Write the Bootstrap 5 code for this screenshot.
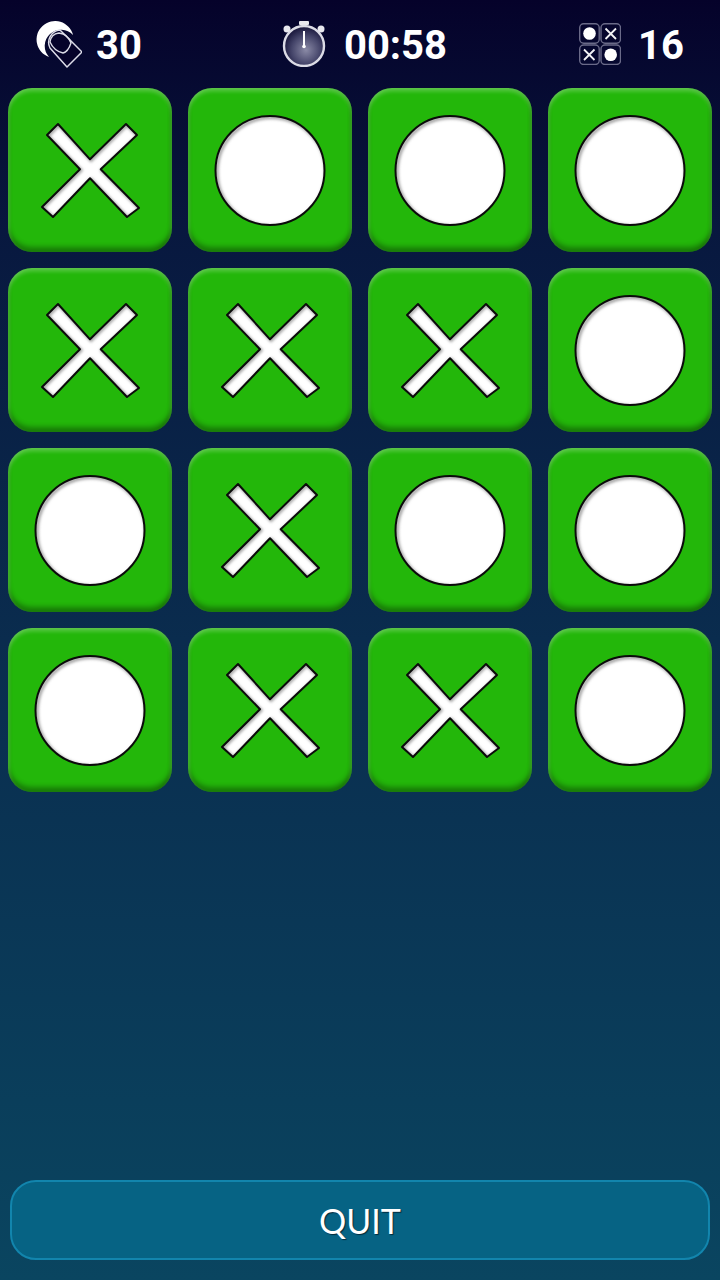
<!DOCTYPE html>
<html lang="en">
<head>
  <meta charset="UTF-8" />
  <meta name="viewport" content="width=device-width, initial-scale=1.0" />
  <title>Tic Tac Grid</title>
  <link href="https://cdn.jsdelivr.net/npm/bootstrap@5.3.3/dist/css/bootstrap.min.css" rel="stylesheet" />
  <style>
    body {
      background: linear-gradient(to bottom, #05022a 0%, #08183f 18%, #0a2c4e 50%, #0a4560 100%);
      min-height: 1280px;
      font-family: Roboto, sans-serif;
    }
    .game-screen { height: 1280px; }
    .stat-bar { height: 88px; padding: 2px 36px 0; }
    .stat-bar svg { margin-top: -2px; }
    .stat-text { font-size: 40px; font-weight: 700; color: #fff; line-height: 1; margin-top: 2px; }
    .stat-clock { margin-left: 6px; gap: 18px; }
    .stat-moves { gap: 14px; margin-right: 2px; }
    .stat-wins { gap: 17px; }
    .board {
      display: grid;
      grid-template-columns: repeat(4, 164px);
      gap: 16px;
      padding: 0 8px;
    }
    .tile {
      height: 164px;
      border-radius: 24px;
      background: #23b70a;
      box-shadow: inset 0 3px 4px rgba(255,255,255,.28), inset 0 -5px 5px rgba(0,0,0,.32), inset 2px 0 3px rgba(255,255,255,.06), inset -2px 0 3px rgba(0,0,0,.12);
    }
    .tile svg { width: 164px; height: 164px; display: block; }
    .quit-wrap { padding: 0 10px 20px; }
    .quit-btn {
      height: 80px;
      border-radius: 26px;
      background: #066384;
      border: 2px solid #1285ad;
      color: #fff;
      font-family: Lato, sans-serif;
      font-size: 34px;
      line-height: 1;
      text-shadow: 1px 1px 1px #04293a;
      padding-top: 8px;
    }
    .quit-btn:hover { background: #066384; color: #fff; border-color: #1285ad; }
  </style>
</head>
<body>
  <svg width="0" height="0" class="position-absolute">
    <defs>
      <filter id="soft" x="-20%" y="-20%" width="140%" height="140%"><feGaussianBlur stdDeviation="1.5" /></filter>
      <clipPath id="xClip"><polygon points="50,36 82,71.3 118,36 129,47 92.7,81.3 131,120 119,129 82,90.3 45,129 34,119 72,81.3 39,47" /></clipPath>
      <clipPath id="oClip"><circle cx="82" cy="82.5" r="54.5" /></clipPath>
      <radialGradient id="dial" cx="55%" cy="60%" r="55%">
        <stop offset="0" stop-color="#8a8aa6" />
        <stop offset=".65" stop-color="#45456a" />
        <stop offset="1" stop-color="#1f1d42" />
      </radialGradient>
      <symbol id="markX" viewBox="0 0 164 164">
        <polygon points="50,36 82,71.3 118,36 129,47 92.7,81.3 131,120 119,129 82,90.3 45,129 34,119 72,81.3 39,47" fill="#fff" />
        <g clip-path="url(#xClip)"><polygon transform="translate(1 1)" points="50,36 82,71.3 118,36 129,47 92.7,81.3 131,120 119,129 82,90.3 45,129 34,119 72,81.3 39,47" fill="none" stroke="#999" stroke-width="3" filter="url(#soft)" /></g>
        <polygon points="50,36 82,71.3 118,36 129,47 92.7,81.3 131,120 119,129 82,90.3 45,129 34,119 72,81.3 39,47" fill="none" stroke="#0b0b0b" stroke-width="2" stroke-linejoin="round" />
      </symbol>
      <symbol id="markO" viewBox="0 0 164 164">
        <circle cx="82" cy="82.5" r="54.5" fill="#fff" />
        <g clip-path="url(#oClip)"><circle transform="translate(1.5 1.5)" cx="82" cy="82.5" r="54.5" fill="none" stroke="#999" stroke-width="3" filter="url(#soft)" /></g>
        <circle cx="82" cy="82.5" r="54.5" fill="none" stroke="#0b0b0b" stroke-width="2" />
      </symbol>
    </defs>
  </svg>

  <div class="game-screen d-flex flex-column">
    <div class="stat-bar d-flex justify-content-between align-items-center">
      <div class="stat-moves d-flex align-items-center">
        <svg width="46" height="47" viewBox="0 0 46 47">
          <path d="M13 36 A18.5 18.5 0 1 1 37 14 A15.5 15.5 0 0 0 13 36 Z" fill="#fff" />
          <path d="M24 9 L46 31 L31 46 L14 27 A12.5 12.5 0 0 1 24 9 Z" fill="#05022a" stroke="#dcdce8" stroke-width="1.5" stroke-linejoin="round" />
          <path d="M23 12 Q32 13 35 22 Q32 31 27 32 Q18 30 14 21 Q15 13 23 12 Z" fill="none" stroke="#dcdce8" stroke-width="1.4" />
        </svg>
        <span class="stat-text">30</span>
      </div>
      <div class="stat-clock d-flex align-items-center">
        <svg width="44" height="46" viewBox="0 0 44 46">
          <rect x="17" y="0" width="10" height="4" rx="1" fill="#e8e8ee" />
          <circle cx="5" cy="8" r="3.5" fill="#e8e8ee" />
          <circle cx="39" cy="8" r="3.5" fill="#e8e8ee" />
          <circle cx="22" cy="25" r="20" fill="url(#dial)" stroke="#dcdce6" stroke-width="2.4" />
          <rect x="21" y="10" width="2" height="15" fill="#fff" />
          <circle cx="22" cy="25.5" r="1.8" fill="#fff" />
        </svg>
        <span class="stat-text">00:58</span>
      </div>
      <div class="stat-wins d-flex align-items-center">
        <svg width="42" height="42" viewBox="0 0 42 42">
          <g fill="none" stroke="#6a6a88" stroke-width="1.4">
            <rect x=".7" y=".7" width="19.5" height="19.5" rx="4" />
            <rect x="22" y=".7" width="19.5" height="19.5" rx="4" />
            <rect x=".7" y="22" width="19.5" height="19.5" rx="4" />
            <rect x="22" y="22" width="19.5" height="19.5" rx="4" />
          </g>
          <circle cx="10.5" cy="10.5" r="6.3" fill="#fff" />
          <circle cx="31.7" cy="31.7" r="6.3" fill="#fff" />
          <path d="M26.5 5.5 L37 16 M37 5.5 L26.5 16 M5 26.5 L15.5 37 M15.5 26.5 L5 37" stroke="#f2f2f6" stroke-width="1.8" fill="none" />
        </svg>
        <span class="stat-text">16</span>
      </div>
    </div>

    <div class="board" id="board"></div>

    <div class="quit-wrap mt-auto">
      <button class="btn quit-btn w-100">QUIT</button>
    </div>
  </div>

  <script>
    const marks = "XOOOXXXOOXOOOXXO".split("");
    const board = document.getElementById("board");
    marks.forEach(m => {
      const tile = document.createElement("div");
      tile.className = "tile";
      tile.innerHTML = `<svg viewBox="0 0 164 164"><use href="#mark${m}" /></svg>`;
      board.appendChild(tile);
    });
  </script>
  <script src="https://cdn.jsdelivr.net/npm/bootstrap@5.3.3/dist/js/bootstrap.bundle.min.js"></script>
</body>
</html>
